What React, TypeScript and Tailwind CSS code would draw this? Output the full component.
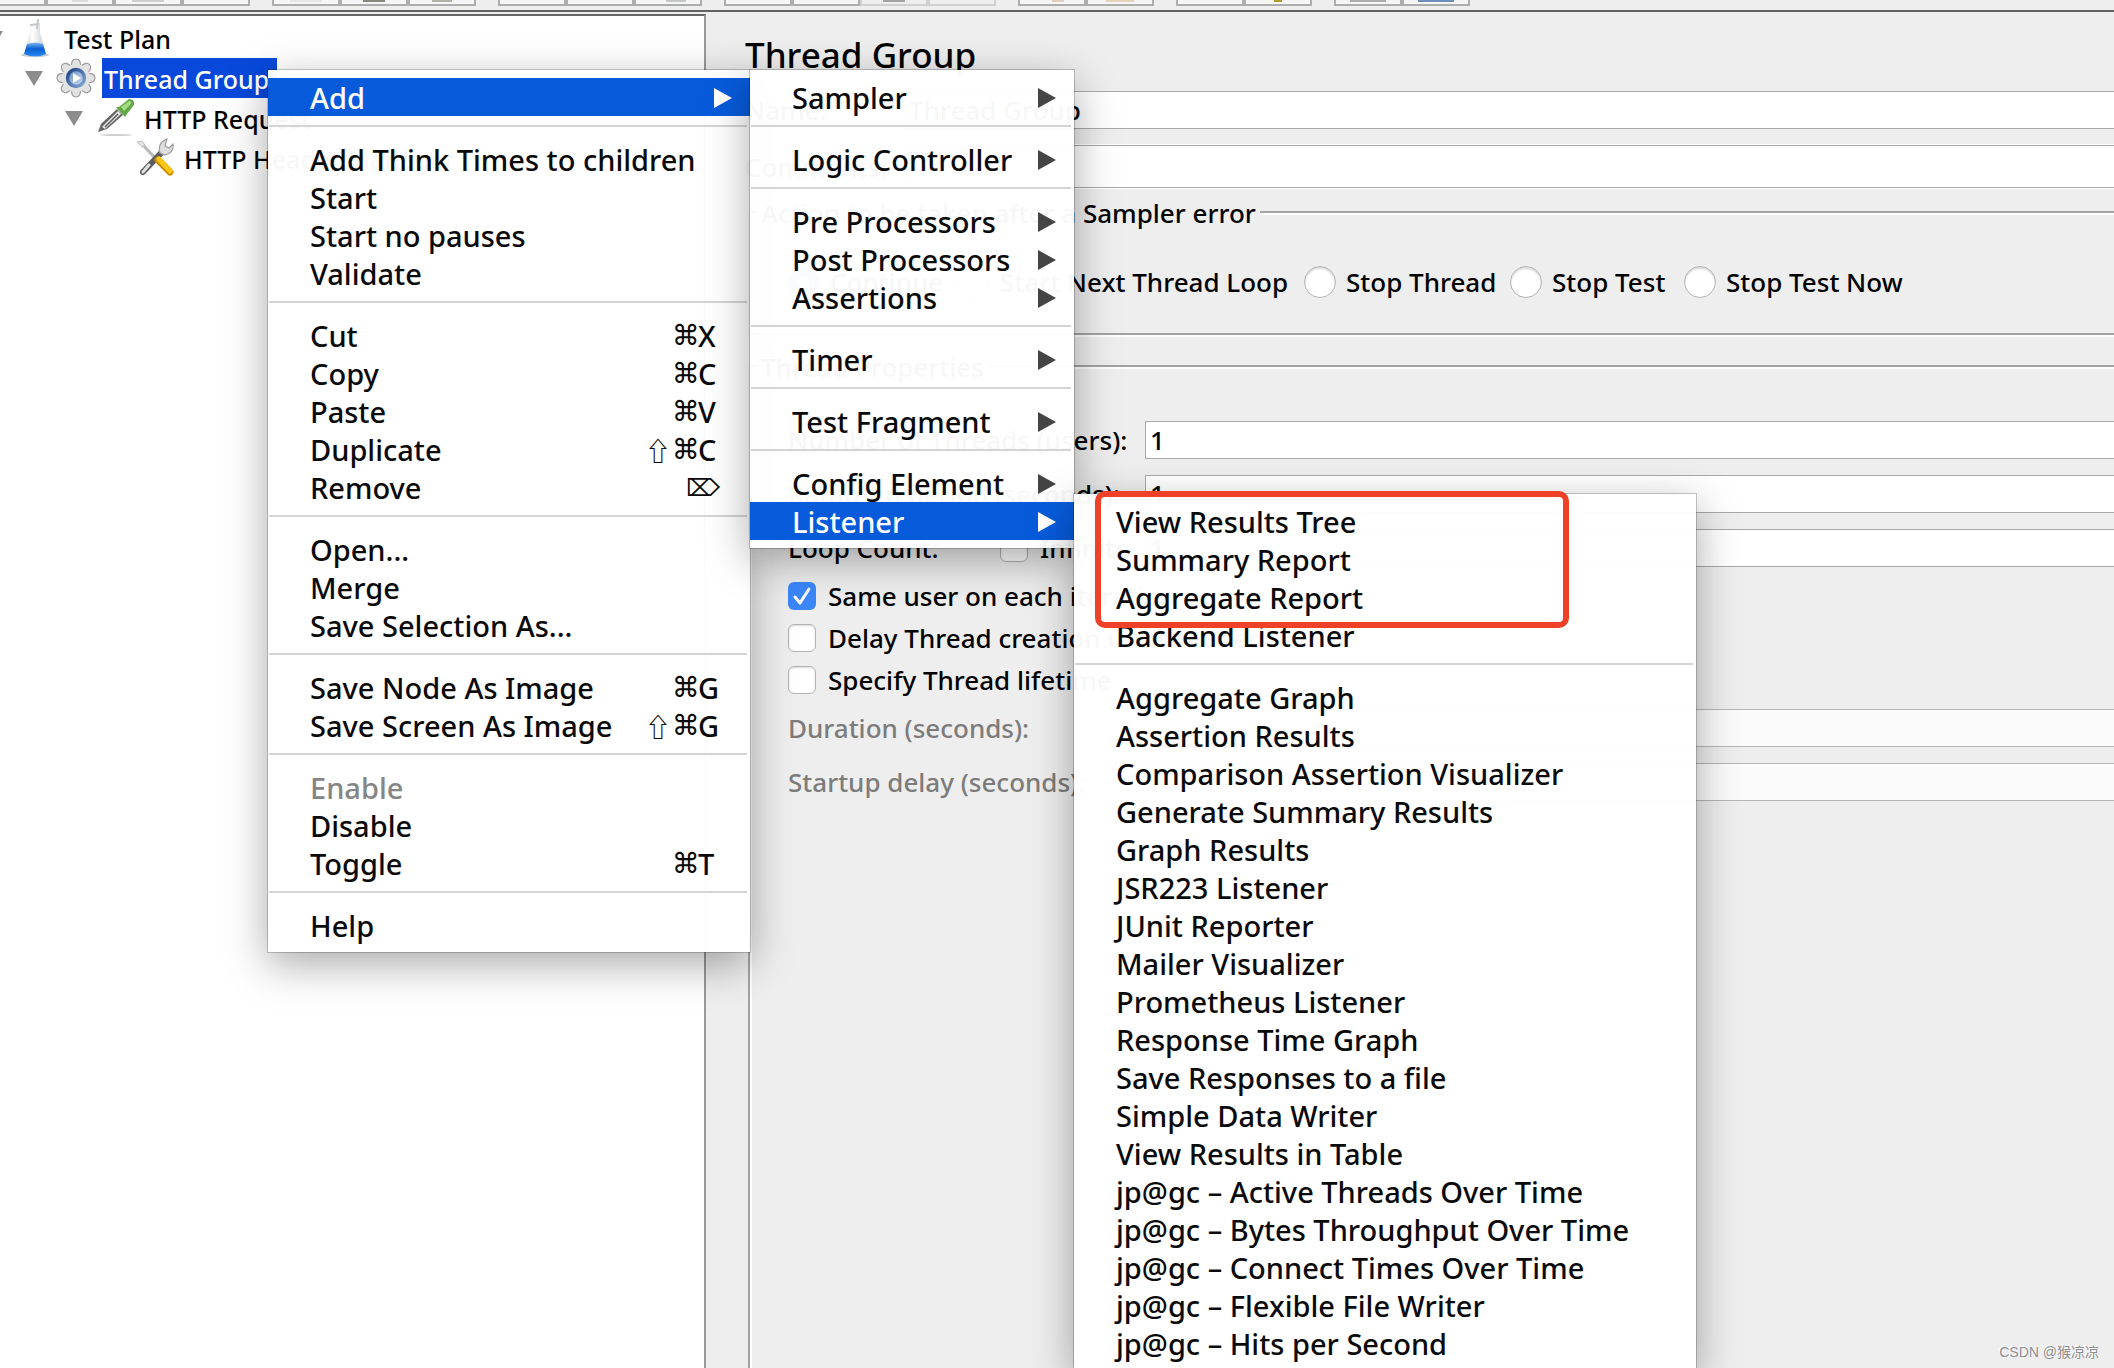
import type { ReactNode } from "react";

type MenuEntry =
  | { kind: "separator" }
  | { kind: "item"; label: string; keys?: string[]; submenu?: boolean; active?: boolean; disabled?: boolean };

const sep: MenuEntry = { kind: "separator" };
const item = (label: string, ...keys: string[]): MenuEntry => ({ kind: "item", label, keys });
const sub = (label: string, active = false): MenuEntry => ({ kind: "item", label, submenu: true, active });

const nodeMenu: MenuEntry[] = [
  sub("Add", true),
  sep,
  item("Add Think Times to children"),
  item("Start"),
  item("Start no pauses"),
  item("Validate"),
  sep,
  item("Cut", "⌘", "X"),
  item("Copy", "⌘", "C"),
  item("Paste", "⌘", "V"),
  item("Duplicate", "⇧", "⌘", "C"),
  item("Remove", "⌦"),
  sep,
  item("Open..."),
  item("Merge"),
  item("Save Selection As..."),
  sep,
  item("Save Node As Image", "⌘", "G"),
  item("Save Screen As Image", "⇧", "⌘", "G"),
  sep,
  { kind: "item", label: "Enable", disabled: true },
  item("Disable"),
  item("Toggle", "⌘", "T"),
  sep,
  item("Help"),
];

const addMenu: MenuEntry[] = [
  sub("Sampler"),
  sep,
  sub("Logic Controller"),
  sep,
  sub("Pre Processors"),
  sub("Post Processors"),
  sub("Assertions"),
  sep,
  sub("Timer"),
  sep,
  sub("Test Fragment"),
  sep,
  sub("Config Element"),
  sub("Listener", true),
];

const listenerMenu: MenuEntry[] = [
  item("View Results Tree"),
  item("Summary Report"),
  item("Aggregate Report"),
  item("Backend Listener"),
  sep,
  item("Aggregate Graph"),
  item("Assertion Results"),
  item("Comparison Assertion Visualizer"),
  item("Generate Summary Results"),
  item("Graph Results"),
  item("JSR223 Listener"),
  item("JUnit Reporter"),
  item("Mailer Visualizer"),
  item("Prometheus Listener"),
  item("Response Time Graph"),
  item("Save Responses to a file"),
  item("Simple Data Writer"),
  item("View Results in Table"),
  item("jp@gc – Active Threads Over Time"),
  item("jp@gc – Bytes Throughput Over Time"),
  item("jp@gc – Connect Times Over Time"),
  item("jp@gc – Flexible File Writer"),
  item("jp@gc – Hits per Second"),
];

function Keys({ keys }: { keys: string[] }) {
  if (keys.length === 1) {
    return <kbd className="ml-auto font-['DejaVu_Sans',sans-serif] text-[24px]">{keys[0]}</kbd>;
  }
  return (
    <kbd className="ml-auto flex items-center font-['Noto_Sans',sans-serif]">
      {keys.map((key) =>
        key === "⇧" ? (
          <span key={key} className="mr-px font-['Noto_Sans_CJK_JP',sans-serif] text-[26px] leading-8">
            {key}
          </span>
        ) : key === "⌘" ? (
          <span key={key} className="w-[26px] font-['DejaVu_Sans',sans-serif] text-[28px]">
            {key}
          </span>
        ) : (
          <span key={key} className="w-[22px]">
            {key}
          </span>
        ),
      )}
    </kbd>
  );
}

function Menu({ label, entries, className }: { label: string; entries: MenuEntry[]; className: string }) {
  return (
    <div
      role="menu"
      aria-label={label}
      className={`absolute bg-white/97 py-2 text-[29px] font-medium shadow-[0_0_0_1px_rgba(0,0,0,0.2),0_12px_40px_rgba(0,0,0,0.34)] ${className}`}
    >
      {entries.map((entry, i) =>
        entry.kind === "separator" ? (
          <div key={i} role="separator" className="h-6 pt-[9px] pr-[3px] pl-px">
            <div className="h-[2px] bg-[#d4d4d4]" />
          </div>
        ) : (
          <button
            key={i}
            type="button"
            role="menuitem"
            disabled={entry.disabled}
            className={`flex h-[38px] w-full items-center pt-px pr-[30px] pl-[42px] text-left whitespace-nowrap ${
              entry.active ? "bg-[#075bdb] text-white" : entry.disabled ? "text-[#858585]" : "text-[#0a0a0a]"
            }`}
          >
            {entry.label}
            {entry.keys && entry.keys.length > 0 && <Keys keys={entry.keys} />}
            {entry.submenu && (
              <svg
                viewBox="0 0 18 20"
                className={`-mr-3 ml-auto h-5 w-[18px] ${entry.active ? "fill-white" : "fill-[#444]"}`}
              >
                <path d="M0 0L18 10L0 20Z" />
              </svg>
            )}
          </button>
        ),
      )}
    </div>
  );
}

// Each toolbar group lists the sliver of icon that shows above the button's lower edge.
const toolbarGroups: { icon: string; disabled?: boolean }[][] = [
  [{ icon: "w-0" }, { icon: "w-4 bg-[#dcdcdc]" }, { icon: "w-8 bg-[#cfcfcf]" }, { icon: "w-0" }],
  [{ icon: "w-8 bg-[#e6e6e6]" }, { icon: "w-[22px] bg-[#88887e]" }, { icon: "w-5 bg-[#b3b3aa]" }],
  [{ icon: "w-0" }, { icon: "w-0" }, { icon: "ml-4 w-5 bg-[#c4c8c4]" }],
  [
    { icon: "w-0" },
    { icon: "w-0" },
    { icon: "w-[22px] bg-[#a3a3a3]", disabled: true },
    { icon: "w-0", disabled: true },
  ],
  [{ icon: "ml-3 w-3 bg-[#e3cdbb]" }, { icon: "w-7 bg-[#e6d3bd]" }],
  [{ icon: "w-0" }, { icon: "w-2 bg-[#b59a28]" }],
  [{ icon: "w-9 bg-[#aeaeae]" }, { icon: "w-9 bg-[#6d8dba]" }],
];

function Toolbar() {
  return (
    <div className="-ml-[22px] flex h-[10px] gap-[22px]">
      {toolbarGroups.map((group, i) => (
        <div key={i} className="flex">
          {group.map((tool, j) => (
            <button
              key={j}
              type="button"
              aria-label={`Tool ${i + 1}.${j + 1}`}
              disabled={tool.disabled}
              className={`flex h-[6px] w-[68px] justify-center border-2 border-t-0 ${
                tool.disabled ? "border-[#d0d0d0] bg-[#eee]" : "border-[#adadad] bg-[#f6f6f6]"
              }`}
            >
              <span className={`h-[2px] ${tool.icon}`} />
            </button>
          ))}
        </div>
      ))}
    </div>
  );
}

function FlaskIcon() {
  return (
    <svg viewBox="0 0 40 40" className="h-10 w-10">
      <defs>
        <linearGradient id="flask-water" x1="0" x2="0" y1="0" y2="1">
          <stop offset="0" stopColor="#7db7f2" />
          <stop offset="0.45" stopColor="#0a5fd0" />
          <stop offset="1" stopColor="#2a8bf5" />
        </linearGradient>
        <linearGradient id="flask-glass" x1="0" x2="1" y1="0" y2="0">
          <stop offset="0" stopColor="#c3ccd4" />
          <stop offset="0.4" stopColor="#ffffff" />
          <stop offset="1" stopColor="#bcc6cf" />
        </linearGradient>
      </defs>
      <ellipse cx="19" cy="37" rx="14" ry="2" fill="#c4cbd2" />
      <path d="M15 6L24 5L24 15L30 36Q19 41 8 36L14 15Z" fill="url(#flask-glass)" />
      <path d="M11 26Q19 23 27 26L30 36Q19 41 8 36Z" fill="url(#flask-water)" />
      <path d="M14 7L23 6M22 1L21 11" stroke="#c2c9cf" strokeWidth="2" fill="none" />
      <path d="M17 9L16 23" stroke="#fff" strokeWidth="2" />
    </svg>
  );
}

function GearIcon() {
  return (
    <svg viewBox="0 0 40 40" className="h-10 w-10">
      <defs>
        <linearGradient id="gear-hub" x1="0" x2="1" y1="0" y2="1">
          <stop offset="0" stopColor="#1b4080" />
          <stop offset="1" stopColor="#86a9d6" />
        </linearGradient>
        <linearGradient id="gear-core" x1="0" x2="1" y1="0" y2="1">
          <stop offset="0" stopColor="#5d86c0" />
          <stop offset="1" stopColor="#d4e4f8" />
        </linearGradient>
      </defs>
      <g fill="#e2e2e2" stroke="#989898" strokeWidth="1.2">
        {[0, 45, 90, 135, 180, 225, 270, 315].map((a) => (
          <path key={a} d="M15.500 9Q15 1 20 1Q25 1 24.500 9Z" transform={`rotate(${a} 20 20)`} />
        ))}
      </g>
      <circle cx="20" cy="20" r="14" fill="#e2e2e2" />
      <circle cx="20" cy="20" r="8.500" fill="url(#gear-core)" stroke="url(#gear-hub)" strokeWidth="3.400" />
      <path d="M17 15L25 20L17 25Z" fill="#fff" />
    </svg>
  );
}

function DropperIcon() {
  return (
    <svg viewBox="0 0 40 40" className="h-10 w-10">
      <ellipse cx="20" cy="37" rx="16" ry="1" fill="#cfcfcf" />
      <path d="M2 34L5 26L21 11L27 17L11 31Z" fill="#666" />
      <path d="M6 29L22 13L25 16L9 31Z" fill="#e9e9e9" />
      <path d="M9 29L22 16" stroke="#555" strokeWidth="1.500" />
      <path d="M20 9L23 9L33 1Q39 1 38 7L31 16L29 19Z" fill="#5fa845" />
      <path d="M25 9L33 3Q36 3 35 6L28 13Z" fill="#a5db85" />
    </svg>
  );
}

function ToolsIcon() {
  return (
    <svg viewBox="0 0 40 40" className="h-10 w-10" fill="none">
      <path d="M5 5L20 21" stroke="#b9b9b9" strokeWidth="3" />
      <path d="M1 4L6 3L9 7L6 9Z" fill="#e2e2e2" stroke="#c0c0c0" />
      <path d="M7 34L27 13" stroke="#5c5c5c" strokeWidth="6" strokeLinecap="round" />
      <path d="M7 34L13 27" stroke="#e0e0e0" strokeWidth="3" strokeLinecap="round" />
      <path
        d="M24 15Q21 5 31 1L29 8L33 10L37 6Q38 15 29 17Z"
        fill="#dedede"
        stroke="#9c9c9c"
        strokeWidth="1.200"
      />
      <path d="M22 22L34 34" stroke="#c98e00" strokeWidth="7" strokeLinecap="round" />
      <path d="M23 21L34 33" stroke="#fbc713" strokeWidth="5" strokeLinecap="round" />
    </svg>
  );
}

type TreeRowProps = {
  icon: ReactNode;
  label: string;
  indent: string;
  leaf?: boolean;
  selected?: boolean;
};

function TreeRow({ icon, label, indent, leaf, selected }: TreeRowProps) {
  return (
    <div role="treeitem" aria-selected={!!selected} className={`flex h-10 items-center ${indent}`}>
      <svg viewBox="0 0 18 15" className={`mr-[13px] h-[15px] w-[18px] shrink-0 ${leaf ? "invisible" : ""}`}>
        <path d="M0 0H18L9 15Z" fill="#8c8c8c" />
      </svg>
      <div className="shrink-0">{icon}</div>
      <span
        className={`ml-[6px] h-10 px-[2px] pt-px leading-10 ${selected ? "bg-[#0849db] pr-2 text-white" : ""}`}
      >
        {label}
      </span>
    </div>
  );
}

const boxClass =
  "size-7 shrink-0 appearance-none rounded-[6px] border border-[#b4b4b4] bg-white shadow-[inset_0_1px_2px_rgba(0,0,0,0.15)]";
const fieldClass = "min-w-0 flex-1 border border-r-0 border-[#a9a9a9] bg-white px-1 outline-none";
const groupClass =
  "border-2 border-r-0 border-[#a3a3a3] pl-[38px] shadow-[inset_2px_2px_0_#fff,0_2px_0_#fff]";
const legendClass = "h-[34px] bg-[#eee] px-1 leading-[36px]";

function CheckRow({ label, checked = false }: { label: string; checked?: boolean }) {
  return (
    <label className="flex h-[42px] items-center gap-3">
      {checked ? (
        <span className="relative size-7">
          <input type="checkbox" defaultChecked className="size-7 appearance-none rounded-[6px] bg-[#3b87fb]" />
          <svg viewBox="0 0 28 28" className="pointer-events-none absolute inset-0 size-7" fill="none">
            <path d="M7 15L12 21L21 7" stroke="#fff" strokeWidth="3" strokeLinecap="round" strokeLinejoin="round" />
          </svg>
        </span>
      ) : (
        <input type="checkbox" className={boxClass} />
      )}
      {label}
    </label>
  );
}

const errorActions = [
  { label: "Continue", width: "w-[170px]" },
  { label: "Start Next Thread Loop", width: "w-[346px]" },
  { label: "Stop Thread", width: "w-[206px]" },
  { label: "Stop Test", width: "w-[174px]" },
  { label: "Stop Test Now", width: "" },
];

function ThreadGroupPanel() {
  return (
    <main className="min-w-0 flex-1 overflow-hidden pl-[39px] text-[26px] font-medium whitespace-nowrap">
      <h1 className="h-[79px] pt-[19px] text-[35px] leading-[48px]">Thread Group</h1>

      <div className="flex h-[38px] items-center">
        <label htmlFor="name" className="w-[159px]">
          Name:
        </label>
        <input id="name" defaultValue="Thread Group" className={`h-[38px] ${fieldClass}`} />
      </div>
      <div className="mt-4 flex h-[43px] items-center">
        <label htmlFor="comments" className="w-[159px]">
          Comments:
        </label>
        <input id="comments" className={`h-[43px] shadow-[0_0_0_1px_#fff] ${fieldClass}`} />
      </div>

      <div className="mt-[7px] pl-[3px]">
        <fieldset className={groupClass}>
          <legend className={`ml-[-31px] ${legendClass}`}>Action to be taken after a Sampler error</legend>
          <div className="flex pt-[37px] pb-[35px]">
            {errorActions.map(({ label, width }, i) => (
              <label key={label} className={`flex h-8 shrink-0 items-center gap-[10px] ${width}`}>
                <input
                  type="radio"
                  name="on-error"
                  defaultChecked={i === 0}
                  className="size-8 shrink-0 appearance-none rounded-full border border-[#b4b4b4] bg-white shadow-[inset_0_2px_2px_rgba(0,0,0,0.15)] checked:border-[10px] checked:border-[#3b87fb]"
                />
                {label}
              </label>
            ))}
          </div>
        </fieldset>

        <fieldset className={`mt-[14px] h-[1100px] ${groupClass}`}>
          <legend className={`ml-[-31px] ${legendClass}`}>Thread Properties</legend>
          <div className="flex flex-col gap-4 pt-[38px]">
            <div className="flex h-[38px] items-center">
              <label htmlFor="threads" className="w-[357px]">
                Number of Threads (users):
              </label>
              <input id="threads" defaultValue="1" className={`h-[38px] ${fieldClass}`} />
            </div>
            <div className="flex h-[38px] items-center">
              <label htmlFor="ramp-up" className="w-[357px]">
                Ramp-up period (seconds):
              </label>
              <input id="ramp-up" defaultValue="1" className={`h-[38px] ${fieldClass}`} />
            </div>
            <div className="flex h-[38px] items-center">
              <label htmlFor="loops" className="w-[212px]">
                Loop Count:
              </label>
              <label className="flex w-[145px] items-center gap-3">
                <input type="checkbox" className={boxClass} />
                Infinite
              </label>
              <input id="loops" defaultValue="1" className={`h-[38px] ${fieldClass}`} />
            </div>
          </div>
          <div className="py-2">
            <CheckRow label="Same user on each iteration" checked />
            <CheckRow label="Delay Thread creation until needed" />
            <CheckRow label="Specify Thread lifetime" />
          </div>
          <div className="flex flex-col gap-4 text-[#7c7c7c]">
            <div className="flex h-[38px] items-center">
              <label htmlFor="duration" className="w-[310px]">
                Duration (seconds):
              </label>
              <input id="duration" disabled className={`h-[38px] opacity-80 ${fieldClass}`} />
            </div>
            <div className="flex h-[38px] items-center">
              <label htmlFor="delay" className="w-[310px]">
                Startup delay (seconds):
              </label>
              <input id="delay" disabled className={`h-[38px] opacity-80 ${fieldClass}`} />
            </div>
          </div>
        </fieldset>
      </div>
    </main>
  );
}

export default function App() {
  return (
    <div className="relative flex h-screen flex-col overflow-hidden bg-[#eee] font-['Noto_Sans',sans-serif] text-[25px] leading-8 text-black">
      <Toolbar />
      <div className="h-[2px] shrink-0 bg-[#626262]" />

      <div className="flex min-h-0 flex-1">
        <nav
          role="tree"
          aria-label="Test plan"
          className="mt-[2px] w-[706px] shrink-0 overflow-hidden border-t-2 border-r-2 border-t-[#666] border-r-[#999] bg-white pt-[2px] font-medium whitespace-nowrap"
        >
          <TreeRow icon={<FlaskIcon />} label="Test Plan" indent="-ml-[15px]" />
          <TreeRow icon={<GearIcon />} label="Thread Group" indent="ml-[25px]" selected />
          <TreeRow icon={<DropperIcon />} label="HTTP Request" indent="ml-[65px]" />
          <TreeRow icon={<ToolsIcon />} label="HTTP Header Manager" indent="ml-[105px]" leaf />
        </nav>
        <ThreadGroupPanel />
      </div>

      <Menu label="Thread Group" entries={nodeMenu} className="top-[70px] left-[268px] w-[482px]" />
      <Menu label="Add" entries={addMenu} className="top-[70px] left-[750px] w-[324px]" />
      <Menu label="Listener" entries={listenerMenu} className="top-[494px] left-[1074px] w-[622px]" />

      {/* highlight around the three most used listeners */}
      <div className="pointer-events-none absolute top-[491px] left-[1095px] h-[137px] w-[474px] rounded-[10px] border-[6px] border-[#ee4128]" />

      <p className="absolute right-[15px] bottom-1 font-['Liberation_Sans','Noto_Sans_CJK_SC',sans-serif] text-[14px] leading-6 text-[#8f8f8f] [text-shadow:-1px_-1px_0_#fff]">
        CSDN @猴凉凉
      </p>
    </div>
  );
}
